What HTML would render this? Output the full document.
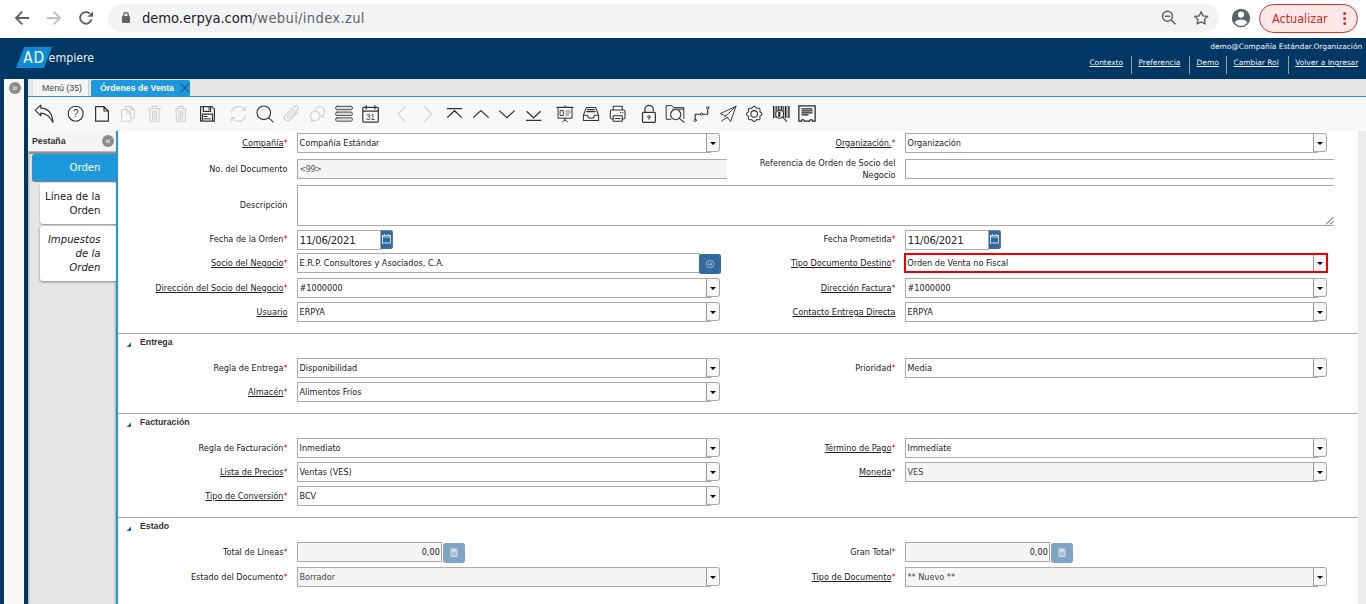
<!DOCTYPE html>
<html lang="es">
<head>
<meta charset="utf-8">
<title>Órdenes de Venta</title>
<style>
*{box-sizing:border-box;margin:0;padding:0}
html,body{width:1366px;height:604px;overflow:hidden;background:#fff}
body{position:relative;font-family:"DejaVu Sans Condensed","Liberation Sans",sans-serif;font-size:9.05px;color:#1c1c1c}
div,span,a{white-space:nowrap}
.a{position:absolute}
#chrome{position:absolute;left:0;top:0;width:1366px;height:38px;background:#fff}
#urlpill{position:absolute;left:108px;top:4px;width:1111px;height:28px;border-radius:14px;background:#f1f3f4}
#url{position:absolute;left:142px;top:8px;height:20px;line-height:20px;font-size:14.6px;color:#202124;letter-spacing:-0.03px}
#url span{color:#5f6368;letter-spacing:0.33px}
#upd{position:absolute;left:1259px;top:4px;width:98.5px;height:28.5px;border:1px solid #d93025;border-radius:14.5px;background:#fce8e6}
#updt{position:absolute;left:1272px;top:8.5px;height:20px;line-height:20px;font-size:12.5px;color:#d5291f}
#hdr{position:absolute;left:0;top:38px;width:1366px;height:41px;background:#003764}
#logo{position:absolute;left:16px;top:47px;width:36px;height:21px;background:#0d8bd5;clip-path:polygon(8.2px 0,36px 0,27.9px 21px,0 21px)}
#ad{position:absolute;left:23.3px;top:48px;height:21px;line-height:21px;font-size:15.3px;color:#fff;letter-spacing:0.7px}
#emp{position:absolute;left:48.6px;top:47.8px;height:21px;line-height:21px;font-size:12.3px;color:#e9edf1}
#user{position:absolute;right:3.8px;top:41px;height:11px;line-height:11px;font-family:"DejaVu Sans","Liberation Sans",sans-serif;font-size:7.45px;color:#f4f4f4}
.hl{position:absolute;top:57px;height:11px;line-height:11px;font-family:"DejaVu Sans","Liberation Sans",sans-serif;font-size:7.45px;color:#f4f4f4;text-decoration:underline}
.hs{position:absolute;top:56px;width:1px;height:18px;background:#a89c7c}
#leftnavy{position:absolute;left:0;top:79px;width:28px;height:525px;background:#003764}
#leftlight{position:absolute;left:4px;top:79px;width:20px;height:525px;background:#f8f8f6}
#exp{position:absolute;left:9px;top:82px;width:12px;height:12px;border-radius:6px;background:#8c8c8c;color:#e4e4e4;font-size:9.5px;font-weight:bold;line-height:11.5px;text-align:center;font-family:"Liberation Sans",sans-serif}
#tabbar{position:absolute;left:28px;top:79px;width:1338px;height:18px;background:#e5e5e5}
#tab1{position:absolute;left:33px;top:80px;width:56px;height:17px;background:#f5f5f5;border-right:1px solid #cfcfcf;font-family:"Liberation Sans",sans-serif;font-size:8.75px;color:#444;line-height:16px;text-align:center;padding-left:3px}
#tab2{position:absolute;left:91px;top:80px;width:98.5px;height:17px;background:#1e98dc;border-radius:2px 2px 0 0;font-family:"Liberation Sans",sans-serif;font-size:8.75px;font-weight:bold;color:#fff;line-height:16px;padding-left:9px}
#tabline{position:absolute;left:28px;top:96px;width:1338px;height:1.2px;background:#1e98dc}
#toolbar{position:absolute;left:28px;top:97.5px;width:1338px;height:33.5px;background:#f8f8f8}
#tbsvg{position:absolute;left:0;top:98px}
#chsvg{position:absolute;left:0;top:0}
#panel{position:absolute;left:28px;top:131px;width:88px;height:473px;background:#e6e6e6;box-shadow:inset 2px 0 2px -1px rgba(0,0,0,.25), inset -2px 0 2px -1px rgba(0,0,0,.25)}
#phead{position:absolute;left:28px;top:131px;width:88px;height:20px;background:#f5f5f5}
#ptitle{position:absolute;left:32px;top:132px;height:20px;line-height:19.5px;font-family:"Liberation Sans",sans-serif;font-size:8.75px;font-weight:bold;color:#333}
#pcol{position:absolute;left:102px;top:135px;width:12px;height:12px;border-radius:6px;background:#8c8c8c;color:#e4e4e4;font-size:9.5px;font-weight:bold;line-height:11.5px;text-align:center;font-family:"Liberation Sans",sans-serif}
#vline{position:absolute;left:116px;top:131px;width:2px;height:473px;background:#1e98dc}
.st{position:absolute;font-size:11.25px;line-height:14px;text-align:right;padding-right:15.5px;border-radius:3px 0 0 3px}
#st1{left:32px;top:153.5px;width:84px;height:27px;background:#1e98dc;color:#fff;padding-top:7.3px;box-shadow:0 1px 1px #777}
#st2{left:40px;top:183px;width:76px;height:41px;background:#fff;color:#222;padding-top:7px;box-shadow:0 1px 2px rgba(0,0,0,.35)}
#st3{left:40px;top:226px;width:76px;height:55px;background:#fff;color:#222;padding-top:7px;font-style:italic;box-shadow:0 1px 3px rgba(0,0,0,.45)}
#content{position:absolute;left:118px;top:131px;width:1240px;height:473px;background:#fff}
#sb{position:absolute;left:1358px;top:131px;width:8px;height:473px;background:#ececec}
.lb{position:absolute;height:12px;line-height:12px;text-align:right;color:#222}
.lb u{text-decoration:underline}
.lb i{font-style:normal;color:#e8000c}
.f{position:absolute;height:20px;border:1px solid #aaa;background:#fff;line-height:18px;padding-left:1.5px;color:#222;overflow:hidden}
.ro{background:#f5f5f5;color:#444}
.nr{border-right:none}
.cb{position:absolute;width:14px;height:19px;border:1px solid #aaa;border-left:1px solid #999;border-radius:0 3px 3px 0;background:#f6f6f6}
.cb:after{content:"";position:absolute;left:2.9px;top:7.8px;border-left:3.2px solid transparent;border-right:3.2px solid transparent;border-top:3.2px solid #000}
.cbt{position:absolute;height:1px;width:4px;background:#aaa}
.dt{font-size:11.2px;letter-spacing:-0.25px;padding-left:1.8px;line-height:19.5px}
.db{position:absolute;width:12px;height:18.5px;background:#336a9d;border-radius:0 2.5px 2.5px 0;border-top:1px solid #6f8192;border-right:1px solid #5f7890}
.sep{position:absolute;left:118px;width:1240px;height:1px;background:#aaa}
.sh{position:absolute;left:140px;height:12px;line-height:12px;font-family:"Liberation Sans",sans-serif;font-size:8.75px;font-weight:bold;color:#333}
.tri{position:absolute;left:126.6px;width:4.4px;height:4.4px;background:#1b61c9;clip-path:polygon(100% 0,100% 100%,0 100%)}
.nb{position:absolute;width:22px;height:20px;border-radius:3px;background:#80a4c4}
</style>
</head>
<body>
<div id="chrome"><div id="urlpill"></div><div id="url">demo.erpya.com<span>/webui/index.zul</span></div><div id="upd"></div><div id="updt">Actualizar</div>
<svg id="chsvg" width="1366" height="38" viewBox="0 0 1366 38" fill="none" stroke-linecap="butt">
<g stroke="#5f6368" stroke-width="1.9" fill="none">
<path d="M29 18H16.5M22.3 11.6L16 18l6.3 6.4"/>
<path d="M89.7 13.5A5.8 5.8 0 1 0 91.5 19.3" />
</g>
<path d="M93 11.2V16.8H87.3z" fill="#5f6368"/>
<g stroke="#bdc1c6" stroke-width="1.9"><path d="M47 18h12.5M53.7 11.6L60 18l-6.3 6.4"/></g>
<rect x="122" y="16" width="8" height="7" rx="0.8" fill="#5f6368"/>
<path d="M123.7 16.5v-1.6a2.3 2.3 0 0 1 4.6 0v1.6" stroke="#5f6368" stroke-width="1.3"/>
<g stroke="#5f6368" stroke-width="1.5"><circle cx="1167.5" cy="16.3" r="5"/><path d="M1171.2 20l4.3 4.3M1164.8 16.3h5.4"/></g>
<path d="M1201.2 11.8l1.95 4.1 4.5.55-3.3 3.1.85 4.45-4-2.2-4 2.2.85-4.45-3.3-3.1 4.5-.55z" stroke="#5f6368" stroke-width="1.4" stroke-linejoin="round"/>
<circle cx="1241" cy="18" r="9.2" fill="#5f6368"/>
<circle cx="1241" cy="14.6" r="3.1" fill="#fff"/>
<path d="M1234.6 22.6c1.2-2.2 3.6-3.2 6.4-3.2s5.2 1 6.4 3.2a8 8 0 0 1-12.8 0z" fill="#fff"/>
<g fill="#d93025"><circle cx="1344.7" cy="13.6" r="1.5"/><circle cx="1344.7" cy="18.5" r="1.5"/><circle cx="1344.7" cy="23.4" r="1.5"/></g>
</svg>
</div>
<div id="hdr"></div><div id="logo"></div><div id="ad">AD</div><div id="emp">empiere</div>
<div id="user">demo@Compañía Estándar.Organización</div>
<a class="hl" style="left:1089.4px">Contexto</a>
<a class="hl" style="left:1138.4px">Preferencia</a>
<a class="hl" style="left:1196.6px">Demo</a>
<a class="hl" style="left:1233.5px">Cambiar Rol</a>
<a class="hl" style="left:1295.2px">Volver a Ingresar</a>
<div class="hs" style="left:1131px"></div>
<div class="hs" style="left:1189px"></div>
<div class="hs" style="left:1226px"></div>
<div class="hs" style="left:1288px"></div>
<div id="leftnavy"></div><div id="leftlight"></div><div id="exp">»</div>
<div id="tabbar"></div><div id="tab1">Menú (35)</div><div id="tab2">Órdenes de Venta</div>
<svg class="a" style="left:179px;top:82px" width="12" height="12" viewBox="0 0 12 12"><path d="M1.5 1.5l8.5 9M10 1.5l-8.5 9" stroke="#1c3040" stroke-width="0.9" fill="none"/></svg>
<div id="tabline"></div><div id="toolbar"></div>
<svg id="tbsvg" width="1366" height="32" viewBox="0 98 1366 32" fill="none" stroke-linejoin="round" stroke-linecap="round">
<path d="M35.2 110.2L40.8 105.2V108.1C47.5 108.4 52.3 113 53 122.4C50.3 116.8 46.3 113.4 40.8 113.1V115.9Z" stroke="#333" stroke-width="1.1"/>
<circle cx="75.7" cy="113.7" r="7.5" stroke="#333" stroke-width="1.1"/>
<text x="75.7" y="117.3" font-family="Liberation Sans, sans-serif" font-size="10" text-anchor="middle" fill="#3a3a3a" stroke="none">?</text>
<path d="M95.6 106.6H104L108.4 111V121.2H95.6ZM104 106.6V111H108.4" stroke="#333" stroke-width="1.2"/>
<path d="M125.5 109V106.5H131L134.5 110V118.2H131.5M131 106.5V110H134.5M121.6 109.5H127.5L131 113V121.3H121.6ZM127.5 109.5V113H131" stroke="#cfcfcf" stroke-width="1.1"/>
<path d="M148.3 108.7H160.7M152 108.5V106.4H157V108.5M149.6 108.9L150.3 121.3H158.7L159.4 108.9M152.6 111V119.5M154.5 111V119.5M156.4 111V119.5" stroke="#cfcfcf" stroke-width="1.1"/>
<path d="M175.6 108.7H186M177.5 108.5L178.5 106.4H183L184 108.5M175.9 108.9L176.6 121.3H185L185.7 108.9M178.9 111V119.5M180.8 111V119.5M182.7 111V119.5" stroke="#cfcfcf" stroke-width="1.1"/>
<path d="M200.6 106.6H211.8L214.4 109.2V121.2H200.6ZM203.3 106.6V111.3H210.6V106.6M202.5 121.2V114.2H212.5V121.2" stroke="#333" stroke-width="1.2"/>
<path d="M209 107.5V110M204 116.5H207M204 118.8H210.5" stroke="#333" stroke-width="1"/>
<path d="M231.5 112.5A7 7 0 0 1 244.5 110M245.3 106.5V110.3H241.5M245.5 115.2A7 7 0 0 1 232.5 117.8M231.7 121.3V117.5H235.5" stroke="#cfcfcf" stroke-width="1.1"/>
<circle cx="263.8" cy="112.8" r="6.8" stroke="#333" stroke-width="1.1"/><path d="M268.7 117.8L273 121.8" stroke="#333" stroke-width="1.1"/>
<path d="M297.5 112L290 119.8A3.2 3.2 0 0 1 285.3 115.3L294.2 106.4A2.3 2.3 0 0 1 297.6 109.6L289.6 117.8A1.2 1.2 0 0 1 287.8 116.2L294.5 109.3" stroke="#cfcfcf" stroke-width="1.1"/>
<path d="M315.2 109.6A4.9 4.9 0 1 1 322.6 115.4L323.6 117.3L321 116.2M310.6 116A4.7 4.7 0 1 1 314.3 120.4L311.3 121.3L311.9 119A4.7 4.7 0 0 1 310.6 116Z" stroke="#cfcfcf" stroke-width="1.1"/>
<rect x="335.5" y="106.3" width="17" height="3.4" rx="1.7" fill="#dedede" stroke="#3a3a3a" stroke-width="0.9"/>
<rect x="335.5" y="112.05" width="17" height="3.4" rx="1.7" fill="#dedede" stroke="#3a3a3a" stroke-width="0.9"/>
<rect x="335.5" y="117.8" width="17" height="3.4" rx="1.7" fill="#dedede" stroke="#3a3a3a" stroke-width="0.9"/>
<rect x="362.8" y="107.4" width="15.5" height="14.7" rx="1" stroke="#333" stroke-width="1.2"/><path d="M362.8 111.2H378.3M366.2 105.6V109M374.9 105.6V109" stroke="#333" stroke-width="1.2"/>
<text x="370.6" y="120.2" font-family="Liberation Sans, sans-serif" font-size="8.2" text-anchor="middle" fill="#444" stroke="none">31</text>
<path d="M405.3 106.3L398.1 114.1L405.3 121.9M424.3 106.3L431.5 114.1L424.3 121.9" stroke="#cfcfcf" stroke-width="1.1" stroke-linecap="butt" stroke-linejoin="miter"/>
<path d="M446.8 108.7H462.2M447.2 117.6L454.5 110.7L461.8 117.6M473.2 117.6L480.9 110.5L488.6 117.6M499.2 110.6L506.9 117.7L514.6 110.6M526.6 111.3L533.6 117.8L540.6 111.3M525.9 120.4H541.3" stroke="#333" stroke-width="1.25" stroke-linecap="butt" stroke-linejoin="miter"/>
<path d="M557 107.3H573" stroke="#333" stroke-width="1.3"/><path d="M558 107.5V118.2H572V107.5M565 105.9V107M565 118.2V120L562.6 121.7M565 120L567.4 121.7" stroke="#333" stroke-width="1"/><path d="M566 111H570M566 113H570M566 115H568.5" stroke="#555" stroke-width="0.8"/><rect x="560.5" y="110.5" width="2.8" height="5" stroke="#333" stroke-width="0.9"/>
<path d="M583.4 115.2L586.4 107.4H595.6L598.6 115.2V120.4H583.4ZM583.4 115.2H587.6C587.6 117.2 589 118.2 591 118.2S594.4 117.2 594.4 115.2H598.6M587.6 109.6H594.4M586.8 111.6H595.2" stroke="#333" stroke-width="1.05"/>
<path d="M613.2 110V106.3H622.2V110M613.2 119H611.8A1.5 1.5 0 0 1 610.3 117.5V111.5A1.5 1.5 0 0 1 611.8 110H623.5A1.5 1.5 0 0 1 625 111.5V117.5A1.5 1.5 0 0 1 623.5 119H622.2M613.2 115.8H622.2V121.2H613.2ZM615.2 118.5H620" stroke="#333" stroke-width="1.05"/><circle cx="620.6" cy="112.6" r="0.7" fill="#333"/><circle cx="622.8" cy="112.6" r="0.7" fill="#333"/>
<rect x="642.5" y="112.4" width="12.9" height="9.9" rx="1" stroke="#333" stroke-width="1.25"/><path d="M644.9 112.4V109.6A4.2 4.2 0 0 1 653.3 109.6V110.8" stroke="#333" stroke-width="1.25"/><circle cx="648.9" cy="116.8" r="1.2" stroke="#333" stroke-width="0.9"/><path d="M648.9 118V119.3" stroke="#333" stroke-width="0.9"/>
<path d="M670.8 119.3H666.2V105.6H672L673.6 107.6H683.8V118.5M672.6 109.2H683.8" stroke="#333" stroke-width="1"/><circle cx="675.7" cy="114.6" r="5.1" fill="#f8f8f8" stroke="#333" stroke-width="1.1"/><path d="M679.5 118.4L683.9 122.3" stroke="#333" stroke-width="1.1"/>
<path d="M695.2 119V114.2H700.2M702.9 114.2H707.7V109.1" stroke="#333" stroke-width="1.1"/><circle cx="695.2" cy="120.3" r="1.2" stroke="#333" stroke-width="0.9"/><circle cx="701.55" cy="114.2" r="1.25" stroke="#333" stroke-width="0.9"/><circle cx="707.7" cy="107.8" r="1.2" stroke="#333" stroke-width="0.9"/>
<path d="M736 106.3L720.3 113.6L725.8 115.9L736 106.3L730.6 121.5L727.3 117.3M725.8 115.9L724.6 117.2M727.3 117.3L721.5 121" stroke="#333" stroke-width="0.95"/>
<path d="M761.85 113.95L761.84 114.08L761.82 114.22L761.78 114.35L761.73 114.48L761.66 114.60L761.58 114.73L761.49 114.84L761.39 114.96L761.28 115.07L761.16 115.18L761.05 115.28L760.93 115.38L760.81 115.48L760.69 115.57L760.58 115.66L760.47 115.75L760.36 115.83L760.27 115.92L760.19 116.01L760.11 116.10L760.05 116.20L760.00 116.29L759.95 116.39L759.92 116.50L759.90 116.61L759.89 116.73L759.89 116.85L759.89 116.98L759.90 117.11L759.92 117.25L759.93 117.39L759.95 117.54L759.97 117.70L759.98 117.85L759.99 118.01L760.00 118.16L760.00 118.32L759.99 118.47L759.97 118.62L759.93 118.76L759.89 118.90L759.84 119.03L759.78 119.15L759.70 119.26L759.61 119.36L759.51 119.45L759.40 119.53L759.28 119.59L759.15 119.64L759.01 119.68L758.87 119.72L758.72 119.74L758.57 119.75L758.41 119.75L758.26 119.74L758.10 119.73L757.95 119.72L757.79 119.70L757.64 119.68L757.50 119.67L757.36 119.65L757.23 119.64L757.10 119.64L756.98 119.64L756.86 119.65L756.75 119.67L756.64 119.70L756.54 119.75L756.45 119.80L756.35 119.86L756.26 119.94L756.17 120.02L756.08 120.11L756.00 120.22L755.91 120.33L755.82 120.44L755.73 120.56L755.63 120.68L755.53 120.80L755.43 120.91L755.32 121.03L755.21 121.14L755.09 121.24L754.98 121.33L754.85 121.41L754.73 121.48L754.60 121.53L754.47 121.57L754.33 121.59L754.20 121.60L754.07 121.59L753.93 121.57L753.80 121.53L753.67 121.48L753.55 121.41L753.42 121.33L753.31 121.24L753.19 121.14L753.08 121.03L752.97 120.91L752.87 120.80L752.77 120.68L752.67 120.56L752.58 120.44L752.49 120.33L752.40 120.22L752.32 120.11L752.23 120.02L752.14 119.94L752.05 119.86L751.95 119.80L751.86 119.75L751.76 119.70L751.65 119.67L751.54 119.65L751.42 119.64L751.30 119.64L751.17 119.64L751.04 119.65L750.90 119.67L750.76 119.68L750.61 119.70L750.45 119.72L750.30 119.73L750.14 119.74L749.99 119.75L749.83 119.75L749.68 119.74L749.53 119.72L749.39 119.68L749.25 119.64L749.12 119.59L749.00 119.53L748.89 119.45L748.79 119.36L748.70 119.26L748.62 119.15L748.56 119.03L748.51 118.90L748.47 118.76L748.43 118.62L748.41 118.47L748.40 118.32L748.40 118.16L748.41 118.01L748.42 117.85L748.43 117.70L748.45 117.54L748.47 117.39L748.48 117.25L748.50 117.11L748.51 116.98L748.51 116.85L748.51 116.73L748.50 116.61L748.48 116.50L748.45 116.39L748.40 116.29L748.35 116.20L748.29 116.10L748.21 116.01L748.13 115.92L748.04 115.83L747.93 115.75L747.82 115.66L747.71 115.57L747.59 115.48L747.47 115.38L747.35 115.28L747.24 115.18L747.12 115.07L747.01 114.96L746.91 114.84L746.82 114.73L746.74 114.60L746.67 114.48L746.62 114.35L746.58 114.22L746.56 114.08L746.55 113.95L746.56 113.82L746.58 113.68L746.62 113.55L746.67 113.42L746.74 113.30L746.82 113.17L746.91 113.06L747.01 112.94L747.12 112.83L747.24 112.72L747.35 112.62L747.47 112.52L747.59 112.42L747.71 112.33L747.82 112.24L747.93 112.15L748.04 112.07L748.13 111.98L748.21 111.89L748.29 111.80L748.35 111.70L748.40 111.61L748.45 111.51L748.48 111.40L748.50 111.29L748.51 111.17L748.51 111.05L748.51 110.92L748.50 110.79L748.48 110.65L748.47 110.51L748.45 110.36L748.43 110.20L748.42 110.05L748.41 109.89L748.40 109.74L748.40 109.58L748.41 109.43L748.43 109.28L748.47 109.14L748.51 109.00L748.56 108.87L748.62 108.75L748.70 108.64L748.79 108.54L748.89 108.45L749.00 108.37L749.12 108.31L749.25 108.26L749.39 108.22L749.53 108.18L749.68 108.16L749.83 108.15L749.99 108.15L750.14 108.16L750.30 108.17L750.45 108.18L750.61 108.20L750.76 108.22L750.90 108.23L751.04 108.25L751.17 108.26L751.30 108.26L751.42 108.26L751.54 108.25L751.65 108.23L751.76 108.20L751.86 108.15L751.95 108.10L752.05 108.04L752.14 107.96L752.23 107.88L752.32 107.79L752.40 107.68L752.49 107.57L752.58 107.46L752.67 107.34L752.77 107.22L752.87 107.10L752.97 106.99L753.08 106.87L753.19 106.76L753.31 106.66L753.42 106.57L753.55 106.49L753.67 106.42L753.80 106.37L753.93 106.33L754.07 106.31L754.20 106.30L754.33 106.31L754.47 106.33L754.60 106.37L754.73 106.42L754.85 106.49L754.98 106.57L755.09 106.66L755.21 106.76L755.32 106.87L755.43 106.99L755.53 107.10L755.63 107.22L755.73 107.34L755.82 107.46L755.91 107.57L756.00 107.68L756.08 107.79L756.17 107.88L756.26 107.96L756.35 108.04L756.45 108.10L756.54 108.15L756.64 108.20L756.75 108.23L756.86 108.25L756.98 108.26L757.10 108.26L757.23 108.26L757.36 108.25L757.50 108.23L757.64 108.22L757.79 108.20L757.95 108.18L758.10 108.17L758.26 108.16L758.41 108.15L758.57 108.15L758.72 108.16L758.87 108.18L759.01 108.22L759.15 108.26L759.28 108.31L759.40 108.37L759.51 108.45L759.61 108.54L759.70 108.64L759.78 108.75L759.84 108.87L759.89 109.00L759.93 109.14L759.97 109.28L759.99 109.43L760.00 109.58L760.00 109.74L759.99 109.89L759.98 110.05L759.97 110.20L759.95 110.36L759.93 110.51L759.92 110.65L759.90 110.79L759.89 110.92L759.89 111.05L759.89 111.17L759.90 111.29L759.92 111.40L759.95 111.51L760.00 111.61L760.05 111.70L760.11 111.80L760.19 111.89L760.27 111.98L760.36 112.07L760.47 112.15L760.58 112.24L760.69 112.33L760.81 112.42L760.93 112.52L761.05 112.62L761.16 112.72L761.28 112.83L761.39 112.94L761.49 113.06L761.58 113.17L761.66 113.30L761.73 113.42L761.78 113.55L761.82 113.68L761.84 113.82L761.85 113.95Z" stroke="#333" stroke-width="1.05"/><circle cx="754.2" cy="113.95" r="3.3" stroke="#333" stroke-width="1.05"/>
<rect x="773" y="106" width="1.2" height="12" fill="#222"/>
<rect x="774.8" y="106" width="0.7" height="12" fill="#222"/>
<rect x="776.2" y="106" width="0.7" height="12" fill="#222"/>
<rect x="777.6" y="106" width="1.2" height="12" fill="#222"/>
<rect x="779.6" y="106" width="0.7" height="12" fill="#222"/>
<rect x="781" y="106" width="1.4" height="12" fill="#222"/>
<rect x="783.2" y="106" width="0.7" height="12" fill="#222"/>
<rect x="784.8" y="106" width="1.3" height="12" fill="#222"/>
<rect x="786.6" y="106" width="0.7" height="12" fill="#222"/>
<rect x="788.3" y="106" width="1.3" height="12" fill="#222"/>
<circle cx="779.7" cy="114.2" r="4" fill="#f8f8f8" stroke="#333" stroke-width="1.1"/><rect x="778.2" y="111.5" width="2.2" height="5.4" fill="#333"/><path d="M782.6 117.1L786.6 121.4" stroke="#333" stroke-width="1.1"/>
<path d="M798.9 105.9H815.1V121.2H812.6A1.5 1.5 0 0 0 809.6 121.2H804.4A1.5 1.5 0 0 0 801.4 121.2H798.9Z" fill="#fff" stroke="#222" stroke-width="1.25" stroke-linejoin="miter"/><path d="M801.5 108.8H812.5M801.5 110.8H812.5M801.5 112.8H812.5M801.5 114.8H808.5" stroke="#222" stroke-width="1.15" stroke-linecap="butt"/>
</svg>
<div id="panel"></div><div id="phead"></div><div id="ptitle">Pestaña</div><div id="pcol">«</div>
<div class="a" style="left:29px;top:151px;width:87px;height:3px;background:linear-gradient(#c9c9c9,#8a8a8a 60%,#8a8a8a)"></div><div id="st1" class="st">Orden</div><div id="st2" class="st">Línea de la<br>Orden</div><div id="st3" class="st">Impuestos<br>de la<br>Orden</div>
<div id="content"></div><div id="vline"></div><div id="sb"></div>
<div class="lb" style="right:1078.5px;top:136.5px"><u>Compañía</u><i>*</i></div>
<div class="f" style="left:297px;top:133px;width:410px">Compañía Estándar</div>
<div class="cb" style="left:706px;top:133px"></div><div class="cbt" style="left:707px;top:152px"></div>
<div class="lb" style="right:470.5px;top:136.5px"><u>Organización.</u><i>*</i></div>
<div class="f" style="left:905px;top:133px;width:409px">Organización</div>
<div class="cb" style="left:1313px;top:133px"></div><div class="cbt" style="left:1314px;top:152px"></div>
<div class="lb" style="right:1078.5px;top:163px">No. del Documento</div>
<div class="f ro nr" style="left:297px;top:159px;width:430px;letter-spacing:-0.55px;color:#555">&lt;99&gt;</div>
<div class="lb" style="right:470.5px;top:157px;height:24px">Referencia de Orden de Socio del<br>Negocio</div>
<div class="f nr" style="left:905px;top:159px;width:429px;"></div>
<div class="lb" style="right:1078.5px;top:199px">Descripción</div>
<div class="f nr" style="left:297px;top:185px;width:1037px;height:41px"></div>
<svg class="a" style="left:1325px;top:216px" width="9" height="9" viewBox="0 0 9 9"><path d="M1 8.5L8.5 1M5 8.5L8.5 5" stroke="#555" stroke-width="1" fill="none"/></svg>
<div class="lb" style="right:1078.5px;top:233px">Fecha de la Orden<i>*</i></div>
<div class="f dt" style="left:297px;top:230px;width:84px">11/06/2021</div>
<div class="db" style="left:380.5px;top:230px"></div>
<svg class="a" style="left:382px;top:234px" width="9" height="10" viewBox="0 0 9 10"><rect x="0.5" y="1.5" width="8" height="7.5" fill="none" stroke="#c9dcef" stroke-width="1"/><path d="M0.5 3h8M2.5 0v2M6.5 0v2" stroke="#c9dcef" stroke-width="1" fill="none"/></svg>
<div class="lb" style="right:470.5px;top:233px">Fecha Prometida<i>*</i></div>
<div class="f dt" style="left:905px;top:230px;width:84px">11/06/2021</div>
<div class="db" style="left:988.5px;top:230px"></div>
<svg class="a" style="left:990px;top:234px" width="9" height="10" viewBox="0 0 9 10"><rect x="0.5" y="1.5" width="8" height="7.5" fill="none" stroke="#c9dcef" stroke-width="1"/><path d="M0.5 3h8M2.5 0v2M6.5 0v2" stroke="#c9dcef" stroke-width="1" fill="none"/></svg>
<div class="lb" style="right:1078.5px;top:257px"><u>Socio del Negocio</u><i>*</i></div>
<div class="f" style="left:297px;top:253px;width:403px;">E.R.P. Consultores y Asociados, C.A.</div>
<div class="a" style="left:699px;top:254px;width:22px;height:20px;border-radius:2.5px;background:#346b9e"></div>
<svg class="a" style="left:704px;top:258px" width="12" height="12" viewBox="0 0 12 12"><circle cx="6" cy="6" r="3.8" fill="none" stroke="#9dbcd9" stroke-width="0.9"/><path d="M4.7 4v4M7.3 4v4M4.7 6.6h2.6" fill="none" stroke="#9dbcd9" stroke-width="0.8"/></svg>
<div class="lb" style="right:470.5px;top:257px"><u>Tipo Documento Destino</u><i>*</i></div>
<div class="f" style="left:904px;top:253px;width:424px;border:2px solid #ee0000;padding-left:1.3px;line-height:16px">Orden de Venta no Fiscal</div>
<div class="a" style="left:1313px;top:255px;width:1px;height:16px;background:#999"></div><div class="a" style="left:1314px;top:255px;width:12px;height:16px;background:#f6f6f6"></div>
<div class="a" style="left:1316.9px;top:261.8px;border-left:3.2px solid transparent;border-right:3.2px solid transparent;border-top:3.2px solid #000"></div>
<div class="lb" style="right:1078.5px;top:281.7px"><u>Dirección del Socio del Negocio</u><i>*</i></div>
<div class="f" style="left:297px;top:278px;width:410px">#1000000</div>
<div class="cb" style="left:706px;top:278px"></div><div class="cbt" style="left:707px;top:297px"></div>
<div class="lb" style="right:470.5px;top:281.7px"><u>Dirección Factura</u><i>*</i></div>
<div class="f" style="left:905px;top:278px;width:409px">#1000000</div>
<div class="cb" style="left:1313px;top:278px"></div><div class="cbt" style="left:1314px;top:297px"></div>
<div class="lb" style="right:1078.5px;top:305.7px"><u>Usuario</u></div>
<div class="f" style="left:297px;top:302px;width:410px">ERPYA</div>
<div class="cb" style="left:706px;top:302px"></div><div class="cbt" style="left:707px;top:321px"></div>
<div class="lb" style="right:470.5px;top:305.7px"><u>Contacto Entrega Directa</u></div>
<div class="f" style="left:905px;top:302px;width:409px">ERPYA</div>
<div class="cb" style="left:1313px;top:302px"></div><div class="cbt" style="left:1314px;top:321px"></div>
<div class="sep" style="top:333px"></div><div class="tri" style="top:342.5px"></div><div class="sh" style="top:336px">Entrega</div>
<div class="lb" style="right:1078.5px;top:361.7px">Regla de Entrega<i>*</i></div>
<div class="f" style="left:297px;top:358px;width:410px">Disponibilidad</div>
<div class="cb" style="left:706px;top:358px"></div><div class="cbt" style="left:707px;top:377px"></div>
<div class="lb" style="right:470.5px;top:361.7px">Prioridad<i>*</i></div>
<div class="f" style="left:905px;top:358px;width:409px">Media</div>
<div class="cb" style="left:1313px;top:358px"></div><div class="cbt" style="left:1314px;top:377px"></div>
<div class="lb" style="right:1078.5px;top:385.7px"><u>Almacén</u><i>*</i></div>
<div class="f" style="left:297px;top:382px;width:410px">Alimentos Fríos</div>
<div class="cb" style="left:706px;top:382px"></div><div class="cbt" style="left:707px;top:401px"></div>
<div class="sep" style="top:413px"></div><div class="tri" style="top:422.5px"></div><div class="sh" style="top:416px">Facturación</div>
<div class="lb" style="right:1078.5px;top:441.7px">Regla de Facturación<i>*</i></div>
<div class="f" style="left:297px;top:438px;width:410px">Inmediato</div>
<div class="cb" style="left:706px;top:438px"></div><div class="cbt" style="left:707px;top:457px"></div>
<div class="lb" style="right:470.5px;top:441.7px"><u>Término de Pago</u><i>*</i></div>
<div class="f" style="left:905px;top:438px;width:409px">Immediate</div>
<div class="cb" style="left:1313px;top:438px"></div><div class="cbt" style="left:1314px;top:457px"></div>
<div class="lb" style="right:1078.5px;top:465.7px"><u>Lista de Precios</u><i>*</i></div>
<div class="f" style="left:297px;top:462px;width:410px">Ventas (VES)</div>
<div class="cb" style="left:706px;top:462px"></div><div class="cbt" style="left:707px;top:481px"></div>
<div class="lb" style="right:470.5px;top:465.7px"><u>Moneda</u><i>*</i></div>
<div class="f ro" style="left:905px;top:462px;width:409px">VES</div>
<div class="cb" style="left:1313px;top:462px"></div><div class="cbt" style="left:1314px;top:481px"></div>
<div class="lb" style="right:1078.5px;top:489.7px"><u>Tipo de Conversión</u><i>*</i></div>
<div class="f" style="left:297px;top:486px;width:410px">BCV</div>
<div class="cb" style="left:706px;top:486px"></div><div class="cbt" style="left:707px;top:505px"></div>
<div class="sep" style="top:517px"></div><div class="tri" style="top:526.5px"></div><div class="sh" style="top:520px">Estado</div>
<div class="lb" style="right:1078.5px;top:545.7px">Total de Líneas<i>*</i></div>
<div class="f ro" style="left:297px;top:542px;width:145px;text-align:right;padding-right:1.2px;color:#222">0,00</div>
<div class="nb" style="left:443px;top:543px"></div>
<svg class="a" style="left:450px;top:548px" width="8" height="10" viewBox="0 0 8 10"><rect x="1" y="1" width="6" height="7.5" rx="0.3" fill="#a9c0d7" stroke="#d4e0ec" stroke-width="1"/><rect x="2" y="2" width="4" height="1.3" fill="#e8eff6"/></svg>
<div class="lb" style="right:470.5px;top:545.7px">Gran Total<i>*</i></div>
<div class="f ro" style="left:905px;top:542px;width:145px;text-align:right;padding-right:1.2px;color:#222">0,00</div>
<div class="nb" style="left:1051px;top:543px"></div>
<svg class="a" style="left:1058px;top:548px" width="8" height="10" viewBox="0 0 8 10"><rect x="1" y="1" width="6" height="7.5" rx="0.3" fill="#a9c0d7" stroke="#d4e0ec" stroke-width="1"/><rect x="2" y="2" width="4" height="1.3" fill="#e8eff6"/></svg>
<div class="lb" style="right:1078.5px;top:570.7px">Estado del Documento<i>*</i></div>
<div class="f ro" style="left:297px;top:567px;width:410px">Borrador</div>
<div class="cb" style="left:706px;top:567px"></div><div class="cbt" style="left:707px;top:586px"></div>
<div class="lb" style="right:470.5px;top:570.7px"><u>Tipo de Documento</u><i>*</i></div>
<div class="f ro" style="left:905px;top:567px;width:409px">** Nuevo **</div>
<div class="cb" style="left:1313px;top:567px"></div><div class="cbt" style="left:1314px;top:586px"></div>
</body>
</html>
